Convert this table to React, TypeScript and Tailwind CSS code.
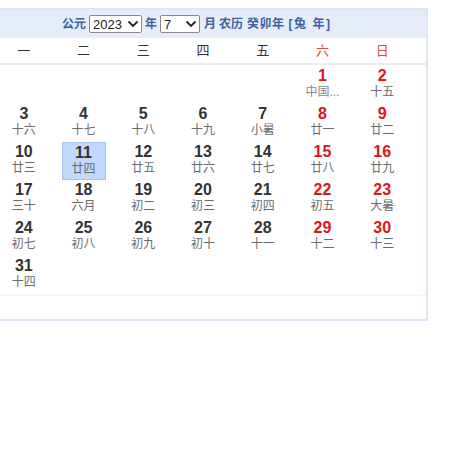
import React from "react";

const WEEK = ["一", "二", "三", "四", "五", "六", "日"];

// 2023年7月，1号是周六
const DAYS: { d: number; lunar: string }[] = [
  { d: 1, lunar: "中国..." },
  { d: 2, lunar: "十五" },
  { d: 3, lunar: "十六" },
  { d: 4, lunar: "十七" },
  { d: 5, lunar: "十八" },
  { d: 6, lunar: "十九" },
  { d: 7, lunar: "小暑" },
  { d: 8, lunar: "廿一" },
  { d: 9, lunar: "廿二" },
  { d: 10, lunar: "廿三" },
  { d: 11, lunar: "廿四" },
  { d: 12, lunar: "廿五" },
  { d: 13, lunar: "廿六" },
  { d: 14, lunar: "廿七" },
  { d: 15, lunar: "廿八" },
  { d: 16, lunar: "廿九" },
  { d: 17, lunar: "三十" },
  { d: 18, lunar: "六月" },
  { d: 19, lunar: "初二" },
  { d: 20, lunar: "初三" },
  { d: 21, lunar: "初四" },
  { d: 22, lunar: "初五" },
  { d: 23, lunar: "大暑" },
  { d: 24, lunar: "初七" },
  { d: 25, lunar: "初八" },
  { d: 26, lunar: "初九" },
  { d: 27, lunar: "初十" },
  { d: 28, lunar: "十一" },
  { d: 29, lunar: "十二" },
  { d: 30, lunar: "十三" },
  { d: 31, lunar: "十四" },
];

const OFFSET = 5;
const TODAY = 11;

function FakeSelect({ value, width }: { value: string; width: string }) {
  return (
    <div
      className={`flex h-[18px] items-center justify-between rounded-[2px] border border-[#8a8a8a] bg-white pl-[3px] pr-[2px] text-[13px] font-normal text-[#222] ${width}`}
    >
      <span className="leading-none">{value}</span>
      <svg width="12" height="8" viewBox="0 0 12 8" aria-hidden>
        <path d="M1.5 1.5 L6 6 L10.5 1.5" fill="none" stroke="#222" strokeWidth="1.8" />
      </svg>
    </div>
  );
}

export default function App() {
  const cells: ({ d: number; lunar: string } | null)[] = [
    ...Array.from({ length: OFFSET }, () => null),
    ...DAYS,
  ];
  while (cells.length < 42) cells.push(null);

  return (
    <div className="h-[473px] w-[473px] overflow-hidden bg-white font-['Liberation_Sans','Noto_Sans_CJK_SC',sans-serif]">
      <div className="ml-[-22px] mt-[8px] w-[450px] border-2 border-[#dce6f8]">
        {/* 头部 */}
        <div className="flex h-[28px] items-center bg-[#e6edf8] pl-[82px] text-[12px] font-bold text-[#3d62a3]">
          <span>公元</span>
          <div className="ml-[3px]">
            <FakeSelect value="2023" width="w-[53px]" />
          </div>
          <span className="ml-[3px]">年</span>
          <div className="ml-[3px]">
            <FakeSelect value="7" width="w-[40px]" />
          </div>
          <span className="ml-[4px]">月</span>
          <span className="ml-[3px]">农历</span>
          <span className="ml-[4px] tracking-[0.5px]">癸卯年</span>
          <span className="ml-[4px] tracking-[1.5px]">[兔 年]</span>
        </div>

        {/* 星期 */}
        <div className="border-b-2 border-[#ececec] px-[14px]">
          <div className="grid h-[25px] grid-cols-7 items-center text-[13px]">
            {WEEK.map((w, i) => (
              <div key={w} className={`text-center ${i >= 5 ? "text-[#dd4a4a]" : "text-[#333]"}`}>
                {w}
              </div>
            ))}
          </div>
        </div>

        {/* 日期 */}
        <div className="mt-[1px] grid grid-cols-7 px-[14px]">
          {cells.map((c, i) => {
            const weekend = i % 7 >= 5;
            return (
              <div key={i} className="flex h-[38px] justify-center">
                {c && (
                  <div
                    className={`flex h-[38px] w-[44px] flex-col items-center pt-[1px] ${
                      c.d === TODAY ? "border border-[#a3c2f0] bg-[#c2d9fc] pt-0" : ""
                    }`}
                  >
                    <span
                      className={`text-[16px] font-bold leading-[18px] ${weekend ? "text-[#d9161a]" : "text-[#333]"}`}
                    >
                      {c.d}
                    </span>
                    <span className={`text-[12px] leading-[15px] ${c.d === 1 ? "text-[#888]" : "text-[#6b6b6b]"}`}>
                      {c.lunar}
                    </span>
                  </div>
                )}
              </div>
            );
          })}
        </div>

        {/* 底部 */}
        <div className="h-[25px] border-t-2 border-[#f6f6f6]" />
      </div>
    </div>
  );
}
